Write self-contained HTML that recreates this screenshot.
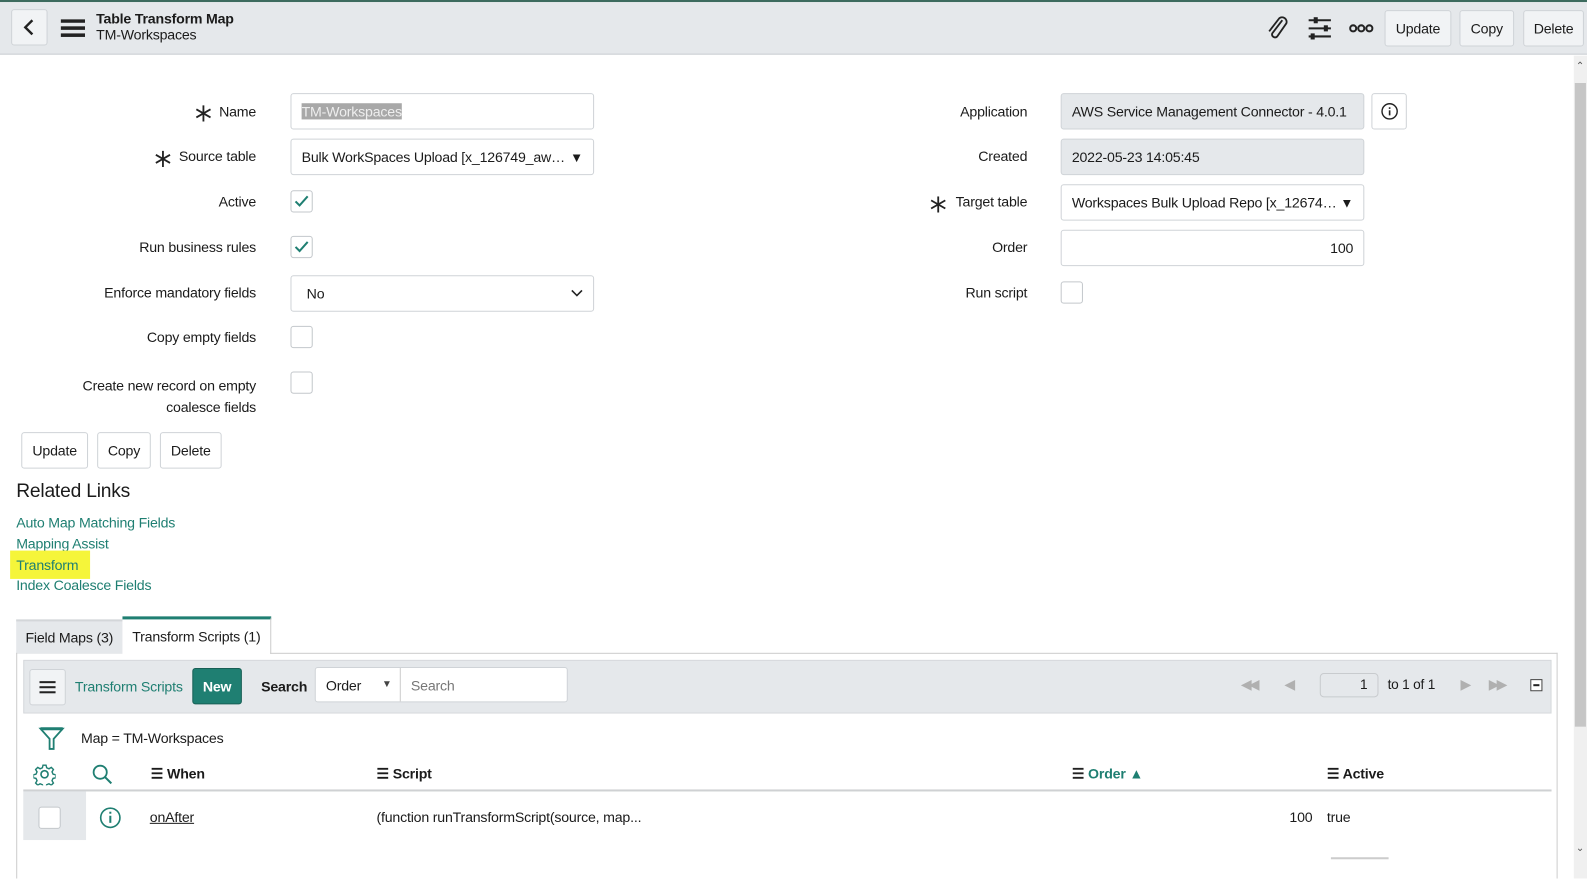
<!DOCTYPE html>
<html><head><meta charset="utf-8"><style>
*{box-sizing:border-box;margin:0;padding:0}
body{width:1587px;height:868px;overflow:hidden;background:#fff;font-family:"Liberation Sans",sans-serif;font-size:13.5px;color:#1b1b1b;position:relative;letter-spacing:-0.2px}
#w{position:absolute;left:0;top:0;width:1568px;height:858px;transform:scale(1.0121);transform-origin:0 0}
.a{position:absolute}
.hdr{left:0;top:0;width:1568px;height:54px;background:#e5e8eb;border-top:2px solid #3d6b5e;border-bottom:1px solid #c9cdd1}
.btn{position:absolute;border:1px solid #cfd3d7;border-radius:3px;background:#f1f3f5;display:flex;align-items:center;justify-content:center;font-size:14px}
.lbl{position:absolute;text-align:right;font-size:14px}
.inp{position:absolute;border:1px solid #cfd3d7;border-radius:3px;background:#fff;display:flex;align-items:center;padding:0 10px;font-size:14px}
.ro{background:#e5e8eb}
.cb{position:absolute;width:22px;height:22px;border:1px solid #c3c7cb;border-radius:3px;background:#fff}
.ast{position:absolute}
.lnk{position:absolute;left:16px;color:#1f7f72;font-size:14px}
.arrow{font-size:13px}
</style></head><body><div id="w">
<div class="a hdr"></div>
<div class="btn" style="left:11px;top:9px;width:36px;height:36px;font-size:22px;">
<svg width="14" height="18" viewBox="0 0 14 18"><path d="M10 2 L3 9 L10 16" stroke="#222" stroke-width="2.4" fill="none"/></svg></div>
<svg class="a" style="left:60px;top:19px" width="24" height="18"><rect y="0" width="24" height="3.5" fill="#222"/><rect y="7" width="24" height="3.5" fill="#222"/><rect y="14" width="24" height="3.5" fill="#222"/></svg>
<div class="a" style="left:95px;top:10px;font-size:14px;font-weight:bold;line-height:16px">Table Transform Map<br><span style="font-weight:normal">TM-Workspaces</span></div>
<svg class="a" style="left:1250px;top:14px" width="24" height="26" viewBox="0 0 24 26"><path d="M17 6 L7 19 a3 3 0 0 0 5 3 L21 9 a4.5 4.5 0 0 0 -7 -5 L4 17" stroke="#222" stroke-width="1.8" fill="none"/></svg>
<svg class="a" style="left:1292px;top:16px" width="24" height="24"><g stroke="#222" stroke-width="2"><line x1="1" y1="4" x2="23" y2="4"/><line x1="1" y1="12" x2="23" y2="12"/><line x1="1" y1="20" x2="23" y2="20"/></g><rect x="6" y="1" width="4" height="6" fill="#222"/><rect x="16" y="9" width="4" height="6" fill="#222"/><rect x="3" y="17" width="4" height="6" fill="#222"/></svg>
<svg class="a" style="left:1333px;top:23px" width="24" height="10"><g stroke="#222" stroke-width="2" fill="none"><circle cx="4" cy="5" r="3"/><circle cx="12" cy="5" r="3"/><circle cx="20" cy="5" r="3"/></g></svg>
<div class="btn" style="left:1368px;top:10px;width:66px;height:36px">Update</div>
<div class="btn" style="left:1442px;top:10px;width:54px;height:36px">Copy</div>
<div class="btn" style="left:1505px;top:10px;width:60px;height:36px">Delete</div>
<div class="a" style="left:1555px;top:55px;width:13px;height:813px;background:#f0f0f0"></div>
<div class="a" style="left:1556px;top:82px;width:11px;height:636px;background:#c6c6c6"></div>
<div class="a" style="left:1557px;top:60px;font-size:10px;color:#555">⌃</div>
<div class="a" style="left:1557px;top:833px;font-size:10px;color:#555">⌄</div>

<svg class="ast" style="left:193px;top:104px" width="16" height="16"><g stroke="#222" stroke-width="1.8"><line x1="8" y1="0" x2="8" y2="16"/><line x1="1" y1="4" x2="15" y2="12"/><line x1="1" y1="12" x2="15" y2="4"/></g></svg>
<div class="lbl" style="right:1315px;top:102px">Name</div>
<div class="inp" style="left:287px;top:92px;width:300px;height:36px"><span style="background:#a8a8a8;color:#eee">TM-Workspaces</span></div>
<svg class="ast" style="left:153px;top:149px" width="16" height="16"><g stroke="#222" stroke-width="1.8"><line x1="8" y1="0" x2="8" y2="16"/><line x1="1" y1="4" x2="15" y2="12"/><line x1="1" y1="12" x2="15" y2="4"/></g></svg>
<div class="lbl" style="right:1315px;top:146px">Source table</div>
<div class="inp" style="left:287px;top:137px;width:300px;height:36px;justify-content:space-between">Bulk WorkSpaces Upload [x_126749_aw…<span class="arrow">▼</span></div>
<div class="lbl" style="right:1315px;top:191px">Active</div>
<div class="cb" style="left:287px;top:188px"><svg width="20" height="20"><path d="M4 10 L8 14 L16 5" stroke="#1f7f72" stroke-width="2" fill="none"/></svg></div>
<div class="lbl" style="right:1315px;top:236px">Run business rules</div>
<div class="cb" style="left:287px;top:233px"><svg width="20" height="20"><path d="M4 10 L8 14 L16 5" stroke="#1f7f72" stroke-width="2" fill="none"/></svg></div>
<div class="lbl" style="right:1315px;top:281px">Enforce mandatory fields</div>
<div class="inp" style="left:287px;top:272px;width:300px;height:36px;justify-content:space-between;padding-left:15px">No<svg width="12" height="8"><path d="M1 1 L6 6 L11 1" stroke="#222" stroke-width="1.6" fill="none"/></svg></div>
<div class="lbl" style="right:1315px;top:325px">Copy empty fields</div>
<div class="cb" style="left:287px;top:322px"></div>
<div class="lbl" style="right:1315px;top:371px;line-height:21px">Create new record on empty<br>coalesce fields</div>
<div class="cb" style="left:287px;top:367px"></div>

<div class="lbl" style="right:553px;top:102px">Application</div>
<div class="inp ro" style="left:1048px;top:92px;width:300px;height:36px">AWS Service Management Connector - 4.0.1</div>
<div class="btn" style="left:1355px;top:92px;width:35px;height:36px;background:#fff"><svg width="18" height="18"><circle cx="9" cy="9" r="7.5" stroke="#222" stroke-width="1.4" fill="none"/><rect x="8.2" y="8" width="1.6" height="5" fill="#222"/><rect x="8.2" y="5" width="1.6" height="1.6" fill="#222"/></svg></div>
<div class="lbl" style="right:553px;top:146px">Created</div>
<div class="inp ro" style="left:1048px;top:137px;width:300px;height:36px">2022-05-23 14:05:45</div>
<svg class="ast" style="left:919px;top:194px" width="16" height="16"><g stroke="#222" stroke-width="1.8"><line x1="8" y1="0" x2="8" y2="16"/><line x1="1" y1="4" x2="15" y2="12"/><line x1="1" y1="12" x2="15" y2="4"/></g></svg>
<div class="lbl" style="right:553px;top:191px">Target table</div>
<div class="inp" style="left:1048px;top:182px;width:300px;height:36px;justify-content:space-between">Workspaces Bulk Upload Repo [x_12674…<span class="arrow">▼</span></div>
<div class="lbl" style="right:553px;top:236px">Order</div>
<div class="inp" style="left:1048px;top:227px;width:300px;height:36px;justify-content:flex-end">100</div>
<div class="lbl" style="right:553px;top:281px">Run script</div>
<div class="cb" style="left:1048px;top:278px"></div>

<div class="btn" style="left:21px;top:427px;width:66px;height:36px;background:#fff">Update</div>
<div class="btn" style="left:96px;top:427px;width:53px;height:36px;background:#fff">Copy</div>
<div class="btn" style="left:158px;top:427px;width:61px;height:36px;background:#fff">Delete</div>

<div class="a" style="left:16px;top:475px;font-size:19px">Related Links</div>
<div class="lnk" style="top:508px">Auto Map Matching Fields</div>
<div class="lnk" style="top:529px">Mapping Assist</div>
<div class="a" style="left:10px;top:544px;width:79px;height:28px;background:#f5f53a"></div>
<div class="lnk" style="top:550px">Transform</div>
<div class="lnk" style="top:570px">Index Coalesce Fields</div>

<div class="a" style="left:16px;top:612px;width:105px;height:34px;background:#e5e8eb;border-top:2px solid #d3d6d9;display:flex;align-items:center;justify-content:center;font-size:14px">Field Maps (3)</div>
<div class="a" style="left:121px;top:609px;width:147px;height:37px;background:#fff;border-top:3px solid #1f7f72;border-right:1px solid #ccc;display:flex;align-items:center;justify-content:center;font-size:14px">Transform Scripts (1)</div>
<div class="a" style="left:267px;top:645px;width:1272px;height:1px;background:#ccc"></div>
<div class="a" style="left:16px;top:645px;width:1px;height:223px;background:#ccc"></div>
<div class="a" style="left:1538px;top:645px;width:1px;height:223px;background:#ccc"></div>
<div class="a" style="left:23px;top:652px;width:1510px;height:53px;background:#e5e8eb;border:1px solid #d6d9dc"></div>
<div class="btn" style="left:29px;top:661px;width:36px;height:36px"><svg width="16" height="14"><rect y="1" width="16" height="2" fill="#222"/><rect y="6" width="16" height="2" fill="#222"/><rect y="11" width="16" height="2" fill="#222"/></svg></div>
<div class="a" style="left:74px;top:670px;color:#1f7f72;font-size:14px">Transform Scripts</div>
<div class="btn" style="left:190px;top:660px;width:49px;height:36px;background:#1f7f72;color:#fff;font-weight:bold;border-color:#185f55">New</div>
<div class="a" style="left:258px;top:670px;font-weight:bold;font-size:14px">Search</div>
<div class="inp" style="left:311px;top:659px;width:250px;height:35px;padding:0"><span style="width:84px;padding-left:10px;display:flex;justify-content:space-between;padding-right:8px;border-right:1px solid #ccc;height:100%;align-items:center">Order<span style="font-size:10px;color:#444">▼</span></span><span style="padding-left:10px;color:#777">Search</span></div>
<div class="a" style="left:1226px;top:668px;color:#b0b0b0;font-size:14px;letter-spacing:-3px">◀◀</div>
<div class="a" style="left:1269px;top:668px;color:#b0b0b0;font-size:14px">◀</div>
<div class="a" style="left:1304px;top:665px;width:58px;height:24px;border:1px solid #c8cbce;border-radius:4px;text-align:right;padding:3px 10px 0 0">1</div>
<div class="a" style="left:1371px;top:669px">to 1 of 1</div>
<div class="a" style="left:1443px;top:668px;color:#b0b0b0;font-size:14px">▶</div>
<div class="a" style="left:1471px;top:668px;color:#b0b0b0;font-size:14px;letter-spacing:-3px">▶▶</div>
<div class="a" style="left:1512px;top:671px;width:12px;height:12px;border:1px solid #444;background:#fff"><div style="margin:4px 2px;height:2px;background:#222"></div></div>

<svg class="a" style="left:38px;top:717px" width="26" height="26"><path d="M2 3 H24 L15 13 V23 H11 V13 Z" stroke="#1f7f72" stroke-width="1.8" fill="none"/><line x1="2" y1="3" x2="24" y2="3" stroke="#1f7f72" stroke-width="3"/></svg>
<div class="a" style="left:80px;top:721px;font-size:14px">Map = TM-Workspaces</div>
<svg class="a" style="left:33px;top:754px" width="22" height="22" viewBox="0 0 22 22"><circle cx="11" cy="11" r="3.5" stroke="#1f7f72" stroke-width="1.6" fill="none"/><path d="M9.5 2 h3 l.6 2.6 2.3 1 2.3-1.4 2.1 2.1-1.4 2.3 1 2.3 2.6.6 v3 l-2.6.6-1 2.3 1.4 2.3-2.1 2.1-2.3-1.4-2.3 1-.6 2.6 h-3 l-.6-2.6-2.3-1-2.3 1.4-2.1-2.1 1.4-2.3-1-2.3-2.6-.6 v-3 l2.6-.6 1-2.3-1.4-2.3 2.1-2.1 2.3 1.4 2.3-1 z" stroke="#1f7f72" stroke-width="1.4" fill="none"/></svg>
<svg class="a" style="left:90px;top:754px" width="22" height="22"><circle cx="9" cy="9" r="6.5" stroke="#1f7f72" stroke-width="1.8" fill="none"/><line x1="14" y1="14" x2="20" y2="20" stroke="#1f7f72" stroke-width="2"/></svg>
<div class="a" style="left:149px;top:756px;font-weight:bold;font-size:14px">☰ When</div>
<div class="a" style="left:372px;top:756px;font-weight:bold;font-size:14px">☰ Script</div>
<div class="a" style="left:1059px;top:756px;font-weight:bold;font-size:14px;color:#1f7f72"><span style="color:#222">☰</span> Order ▲</div>
<div class="a" style="left:1311px;top:756px;font-weight:bold;font-size:14px">☰ Active</div>
<div class="a" style="left:23px;top:780px;width:1510px;height:2px;background:#cfd1d3"></div>
<div class="a" style="left:23px;top:782px;width:62px;height:48px;background:#e5e8eb"></div>
<div class="cb" style="left:38px;top:797px"></div>
<svg class="a" style="left:97px;top:796px" width="24" height="24"><circle cx="12" cy="12" r="9.5" stroke="#1f7f72" stroke-width="1.6" fill="none"/><rect x="11" y="10" width="2" height="7" fill="#1f7f72"/><rect x="11" y="6" width="2" height="2" fill="#1f7f72"/></svg>
<div class="a" style="left:148px;top:799px;text-decoration:underline;font-size:14px">onAfter</div>
<div class="a" style="left:372px;top:799px;font-size:14px">(function runTransformScript(source, map...</div>
<div class="a" style="left:1274px;top:799px;font-size:14px">100</div>
<div class="a" style="left:1311px;top:799px;font-size:14px">true</div>
<div class="a" style="left:1315px;top:847px;width:57px;height:2px;background:#ccc"></div>
</div></body></html>
